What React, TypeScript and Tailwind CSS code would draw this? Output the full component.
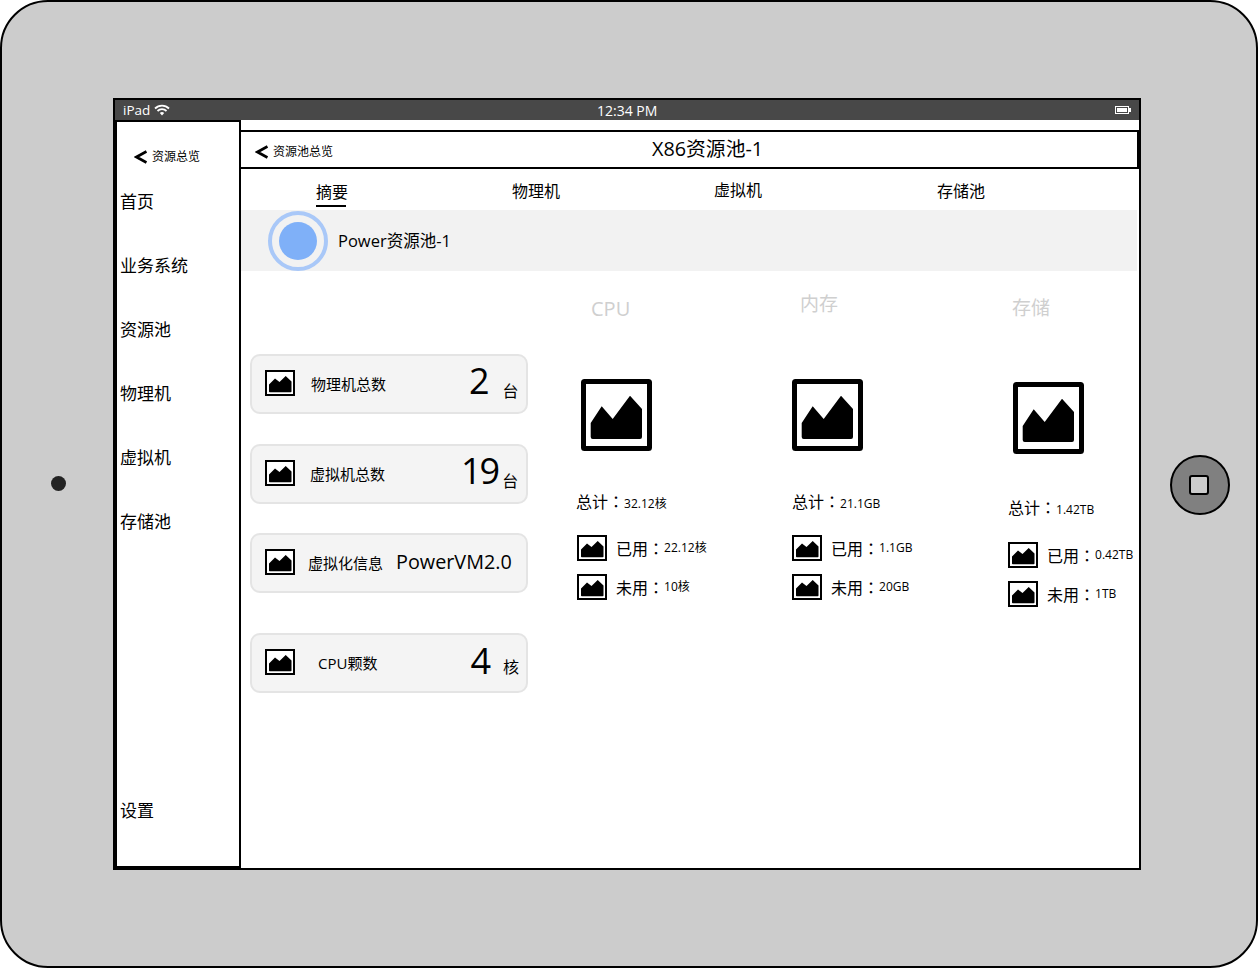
import React from "react";

const FONT = "font-['Open_Sans','Noto_Sans_CJK_SC',sans-serif]";

// placeholder picture icon, small version (cards and rows)
const SmallPic = () => (
  <svg width="30" height="26" viewBox="0 0 30 26" className="shrink-0 block">
    <rect x="1" y="1" width="28" height="24" fill="#fff" stroke="#000" strokeWidth="2" />
    <path d="M4 14.5 L10 8.5 L14.5 12 L20.7 6 L26.5 11.5 V21.5 Q26.5 22.3 25.7 22.3 H4.8 Q4 22.3 4 21.5 Z" fill="#000" />
  </svg>
);

const BigPic = () => (
  <svg width="71" height="72" viewBox="0 0 71 72" className="shrink-0 block">
    <rect x="2.5" y="2.5" width="66" height="67" rx="1" fill="#fff" stroke="#000" strokeWidth="5" />
    <path d="M9.7 44 L20.7 27.3 L31.7 40 L49 16.7 L61 30 V58 Q61 60 59 60 H11.7 Q9.7 60 9.7 58 Z" fill="#000" />
  </svg>
);

const Chevron = () => (
  <svg width="13" height="14" viewBox="0 0 13 14" className="block shrink-0">
    <path d="M12.5 1.5 L2.5 7 L12.5 12.5" fill="none" stroke="#000" strokeWidth="2.8" />
  </svg>
);

// the reference uses a centred full-width colon, which the TC face has
const Colon = () => <span className="font-['Noto_Sans_CJK_TC',sans-serif]">：</span>;

const navItems = ["首页", "业务系统", "资源池", "物理机", "虚拟机", "存储池"];

const Sidebar = () => (
  <div className="w-[126px] shrink-0 h-full border-2 border-black flex flex-col">
    <div className="flex items-center gap-[5px] pl-[17px] mt-[27px] h-[16px]">
      <Chevron />
      <span className="text-[12px] text-black">资源总览</span>
    </div>
    <div className="mt-[25px] pl-[3px] flex flex-col gap-[40px]">
      {navItems.map((n) => (
        <div key={n} className="h-[24px] leading-[24px] text-[17px] text-black">{n}</div>
      ))}
    </div>
    <div className="mt-auto mb-[43px] pl-[3px] h-[24px] leading-[24px] text-[17px] text-black">设置</div>
  </div>
);

const StatCard = ({ label, labelCls, value, valueCls, unit, unitCls }: any) => (
  <div className="h-[60px] w-[278px] rounded-[10px] border-2 border-[#e4e4e4] bg-[#f4f4f4] flex items-center pl-[13px] pb-[2px]">
    <SmallPic />
    <span className={`text-[15px] text-black mt-[2px] ${labelCls}`}>{label}</span>
    <span className={`text-black ${valueCls}`}>{value}</span>
    {unit && <span className={`text-[16px] text-black ${unitCls}`}>{unit}</span>}
  </div>
);

const UsageRow = ({ label, value }: { label: string; value: string }) => (
  <div className="flex items-center h-[26px]">
    <SmallPic />
    <span className="ml-[9px] text-[16px] text-black whitespace-nowrap">{label}<Colon /></span>
    <span className="text-[12px] text-black whitespace-nowrap">{value}</span>
  </div>
);

const columns = [
  { title: "CPU", titleCls: "mt-[23px] ml-[15px] text-[20px]", iconCls: "mt-[55px] ml-[5px]", total: "32.12核", used: "22.12核", free: "10核", totalCls: "mt-[39px]", rowCls: "mt-[23px] ml-[1px]", w: "w-[216px]" },
  { title: "内存", titleCls: "mt-[18px] ml-[8px] text-[19px]", iconCls: "mt-[60px] ml-[0px]", total: "21.1GB", used: "1.1GB", free: "20GB", totalCls: "mt-[39px]", rowCls: "mt-[23px]", w: "w-[216px]" },
  { title: "存储", titleCls: "mt-[22px] ml-[4px] text-[19px]", iconCls: "mt-[59px] ml-[5px]", total: "1.42TB", used: "0.42TB", free: "1TB", totalCls: "mt-[42px]", rowCls: "mt-[24px]", w: "w-[130px]" },
];

const ResourceColumn = ({ c }: { c: (typeof columns)[number] }) => (
  <div className={`shrink-0 flex flex-col ${c.w}`}>
    <div className={`h-[30px] leading-[30px] text-[#cfcfcf] ${c.titleCls}`}>{c.title}</div>
    <div className={c.iconCls}><BigPic /></div>
    <div className={`h-[22px] leading-[22px] whitespace-nowrap ${c.totalCls}`}>
      <span className="text-[16px] text-black">总计<Colon /></span>
      <span className="text-[12px] text-black">{c.total}</span>
    </div>
    <div className={`flex flex-col gap-[13px] ${c.rowCls}`}>
      <UsageRow label="已用" value={c.used} />
      <UsageRow label="未用" value={c.free} />
    </div>
  </div>
);

export default function App() {
  return (
    <div className={`w-[1258px] h-[969px] relative bg-white overflow-hidden ${FONT}`}>
      <div className="w-[1258px] h-[968px] rounded-[48px] border-2 border-black bg-[#cccccc] flex items-center">
        {/* camera dot */}
        <div className="ml-[49px] -mt-[2px] w-[15px] h-[15px] rounded-full bg-[#222]" />
        {/* screen */}
        <div className="ml-[47px] w-[1028px] h-[772px] shrink-0 border-2 border-black bg-white flex flex-col">
          <div className="h-[20px] bg-[#484848] shrink-0 flex items-center text-white relative">
            <span className="ml-[8px] text-[13.5px] mt-[1px]">iPad</span>
            <svg width="16" height="12" viewBox="0 0 16 12" className="ml-[4px]">
              <path d="M1 4.5 A10 10 0 0 1 15 4.5 M3.5 7 A6.5 6.5 0 0 1 12.5 7" fill="none" stroke="#fff" strokeWidth="1.8" />
              <path d="M5.8 9 A3.2 3.2 0 0 1 10.2 9 L8 11.5 Z" fill="#fff" />
            </svg>
            <span className="absolute left-[482px] top-0 text-[14px] leading-[22px]">12:34 PM</span>
            <div className="ml-auto mr-[8px] flex items-center">
              <div className="w-[14px] h-[8px] border border-white p-[1px]"><div className="w-[10px] h-full bg-white" /></div>
              <div className="w-[2px] h-[4px] bg-white" />
            </div>
          </div>
          <div className="flex-1 flex min-h-0">
            <Sidebar />
            <div className="flex-1 flex flex-col min-w-0">
              <div className="h-[10px] shrink-0" />
              <div className="h-[39px] shrink-0 border-t-2 border-b-2 border-r-[2px] border-black flex items-center pl-[14px]">
                <div className="flex items-center mt-[4px]">
                  <Chevron />
                  <span className="ml-[5px] text-[12px] text-black">资源池总览</span>
                </div>
                <span className="ml-[319px] -mt-[2px] text-[19.8px] text-black">X86资源池-1</span>
              </div>
              <div className="h-[41px] shrink-0 flex text-[16px] text-black">
                <div className="ml-[75px] mt-[11px] w-[32px]">
                  <div className="leading-[24px]">摘要</div>
                  <div className="w-[30px] h-[2px] bg-black mt-[1px]" />
                </div>
                <div className="ml-[164px] mt-[11px] leading-[22px] w-[48px] whitespace-nowrap">物理机</div>
                <div className="ml-[154px] mt-[10px] leading-[22px] w-[48px] whitespace-nowrap">虚拟机</div>
                <div className="ml-[175px] mt-[11px] leading-[22px] w-[48px] whitespace-nowrap">存储池</div>
              </div>
              <div className="h-[61px] shrink-0 mr-[2px] bg-[#f2f2f2] flex items-center pl-[27px]">
                <div className="w-[60px] h-[60px] rounded-full border-[4px] border-[#a9c8f8] flex items-center justify-center">
                  <div className="w-[38px] h-[38px] rounded-full bg-[#7fb0f8]" />
                </div>
                <span className="ml-[10px] mt-[1px] text-[16.5px] text-black">Power资源池-1</span>
              </div>
              <div className="flex-1 flex min-h-0">
                <div className="ml-[9px] mt-[83px] w-[278px] shrink-0 flex flex-col">
                  <StatCard label="物理机总数" labelCls="ml-[16px]" value="2" valueCls="ml-[83px] text-[36px] leading-none -mt-[4px]" unit="台" unitCls="ml-[13px] mt-[16px]" />
                  <div className="h-[30px]" />
                  <StatCard label="虚拟机总数" labelCls="ml-[15px]" value="19" valueCls="ml-[76px] text-[36px] leading-none -mt-[4px] tracking-[-2px]" unit="台" unitCls="ml-[4px] mt-[16px]" />
                  <div className="h-[29px]" />
                  <StatCard label="虚拟化信息" labelCls="ml-[13px]" value="PowerVM2.0" valueCls="ml-[13px] text-[19.8px]" />
                  <div className="h-[40px]" />
                  <StatCard label="CPU颗数" labelCls="ml-[23px]" value="4" valueCls="ml-[93px] text-[36px] leading-none -mt-[2px]" unit="核" unitCls="ml-[12px] mt-[10px]" />
                </div>
                <div className="ml-[48px] flex">
                  {columns.map((c) => (
                    <ResourceColumn key={c.title} c={c} />
                  ))}
                </div>
              </div>
            </div>
          </div>
        </div>
        {/* home button */}
        <div className="ml-[29px] mt-[2px] w-[60px] h-[60px] rounded-full border-2 border-black bg-[#808080] flex items-center justify-center">
          <div className="-ml-[2px] w-[20px] h-[20px] rounded-[3px] border-2 border-black bg-[#cccccc]" />
        </div>
      </div>
    </div>
  );
}
